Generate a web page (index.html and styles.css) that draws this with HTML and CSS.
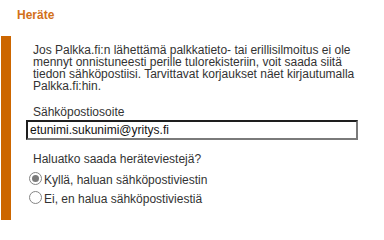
FILE: index.html
```html
<!DOCTYPE html>
<html lang="fi">
<head>
<meta charset="utf-8">
<title>Heräte</title>
<link rel="stylesheet" href="styles.css">
</head>
<body>
<h2 class="title">Heräte</h2>
<div class="panel">
  <p class="info">Jos Palkka.fi:n lähettämä palkkatieto- tai erillisilmoitus ei ole mennyt onnistuneesti perille tulorekisteriin, voit saada siitä tiedon sähköpostiisi. Tarvittavat korjaukset näet kirjautumalla Palkka.fi:hin.</p>
  <label class="field-label" for="email">Sähköpostiosoite</label>
  <input class="email" id="email" type="text" value="etunimi.sukunimi@yritys.fi">
  <p class="question">Haluatko saada heräteviestejä?</p>
  <label class="option"><input class="radio" type="radio" name="herate" checked><span class="option-text">Kyllä, haluan sähköpostiviestin</span></label>
  <label class="option"><input class="radio" type="radio" name="herate"><span class="option-text">Ei, en halua sähköpostiviestiä</span></label>
</div>
</body>
</html>
```
FILE: styles.css
```css
html, body {
  margin: 0;
  padding: 0;
  background: #ffffff;
}
body {
  font-family: "Liberation Sans", Arial, sans-serif;
  font-size: 12px;
  color: #333333;
}
.title {
  margin: 8px 0 14px 17px;
  font-size: 12px;
  line-height: 14px;
  font-weight: bold;
  color: #d2701a;
}
.panel {
  margin-left: 1px;
  width: 327px;
  border-left: 10px solid #cc6600;
  padding: 8px 0 13px 22px;
  display: flex;
  flex-direction: column;
  align-items: flex-start;
}
.info {
  margin: 0;
  line-height: 12px;
}
.field-label {
  margin-top: 14px;
  line-height: 12px;
}
.email {
  margin: 2px 0 0 -7px;
  width: 332px;
  height: 20px;
  box-sizing: border-box;
  padding: 0 2px;
  border-style: solid;
  border-width: 2px;
  border-color: #1e1e1e #7a7a7a #7a7a7a #1e1e1e;
  font-family: "Liberation Sans", Arial, sans-serif;
  font-size: 12px;
  color: #111111;
  outline: none;
  background: #ffffff;
}
.question {
  margin: 13px 0 0 0;
  line-height: 12px;
}
.option {
  display: flex;
  align-items: flex-start;
  height: 19px;
  margin-left: -4px;
}
.question + .option {
  margin-top: 4px;
}
.radio {
  appearance: none;
  -webkit-appearance: none;
  margin: 3px 2px 0 0;
  width: 13px;
  height: 13px;
  box-sizing: border-box;
  border: 1px solid #858585;
  border-radius: 50%;
  background: #ffffff;
  position: relative;
}
.radio:checked::after {
  content: "";
  position: absolute;
  left: 2px;
  top: 2px;
  width: 7px;
  height: 7px;
  border-radius: 50%;
  background: #7b7b7b;
}
.option-text {
  padding-top: 5px;
  line-height: 12px;
}
```
